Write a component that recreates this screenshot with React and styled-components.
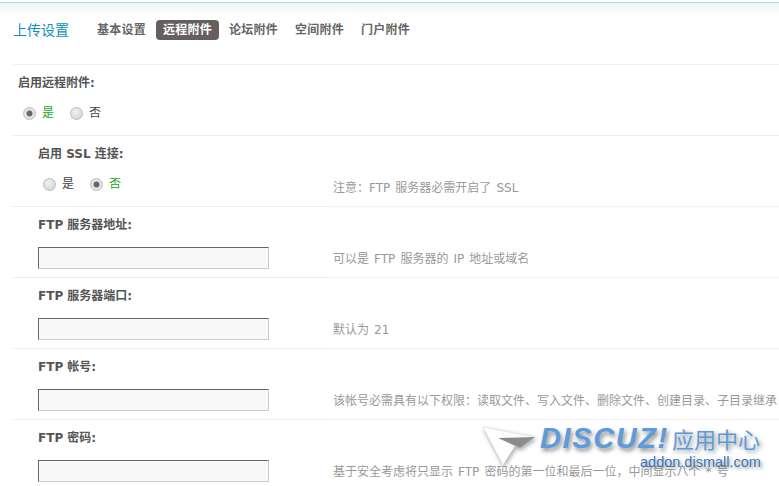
import React from 'react'
import styled, { createGlobalStyle } from 'styled-components'

const CJK = '"DejaVu Sans", "Noto Sans CJK SC", sans-serif'

const GlobalStyle = createGlobalStyle`
  html, body {
    margin: 0;
    height: 100%;
    overflow: hidden;
    background: #fff;
  }
  body {
    font: 12px/18px ${CJK};
    color: #444;
  }
`

const Page = styled.div`
  position: relative;
  width: 779px;
  height: 486px;
  overflow: hidden;
  padding-top: 2px;
  box-sizing: border-box;
`

const Header = styled.div`
  height: 61px;
  margin-bottom: 1px;
  padding: 17px 0 0 13px;
  box-sizing: border-box;
  border-top: 1px solid #bcd3de;
  background: linear-gradient(#e9f4fa, #fff 13px);
  display: flex;
  align-items: flex-start;
`

const Title = styled.h1`
  margin: 0 21px 0 0;
  font-size: 14px;
  font-weight: 400;
  line-height: 20px;
  color: #0d8fba;
`

const Tabs = styled.div`
  display: flex;
  gap: 3px;
`

const Tab = styled.a`
  padding: 0 7px;
  height: 20px;
  line-height: 20px;
  border-radius: 4px;
  font-weight: 700;
  letter-spacing: 0.25px;
  color: ${p => (p.$active ? '#fff' : '#666')};
  background: ${p => (p.$active ? '#665f62' : 'transparent')};
`

const Row = styled.div`
  display: grid;
  grid-template-columns: 316px 1fr;
  height: ${p => (p.$first ? 72 : 71)}px;
  margin-left: 13px;
  border-top: ${p => (p.$first ? '1px solid #f1f1f1' : 'none')};
  box-sizing: border-box;
`

const Main = styled.div`
  padding: 8px 0 0 ${p => (p.$top ? 5 : 25)}px;
  border-bottom: 1px solid #e2eef5;
`

const Label = styled.div`
  height: 20px;
  line-height: 20px;
  font-weight: 700;
  color: #555;
`

const Hint = styled.div`
  padding: 43px 0 0 4px;
  line-height: 18px;
  color: #999;
  word-spacing: 1.25px;
  white-space: nowrap;
  overflow: hidden;
  border-bottom: 1px solid ${p => (p.$top ? '#e2eef5' : '#f2f2f2')};
`

const Choices = styled.div`
  display: flex;
  align-items: center;
  gap: 16px;
  margin: 11px 0 0 5px;
`

const Choice = styled.label`
  display: flex;
  align-items: center;
  gap: 6px;
  color: ${p => (p.$on ? '#1aa81a' : '#444')};
`

const Radio = styled.input.attrs({ type: 'radio', readOnly: true })`
  appearance: none;
  width: 13px;
  height: 13px;
  margin: 0;
  border-radius: 50%;
  border: 1px solid #bbb;
  box-sizing: border-box;
  background: ${p =>
    p.checked
      ? 'radial-gradient(circle, #666 0 2.6px, #e4e4e4 3.4px)'
      : 'radial-gradient(circle at 40% 35%, #f2f2f2, #cfcfcf)'};
`

const TextInput = styled.input`
  display: block;
  width: 231px;
  height: 22px;
  margin-top: 12px;
  padding: 0;
  box-sizing: border-box;
  border: 1px solid;
  border-color: #666 #ccc #ccc #666;
  background: #f9f9f9;
`

const Watermark = styled.div`
  position: absolute;
  left: 481px;
  top: 424px;
  width: 290px;
  height: 60px;
`

const Arrow = styled.svg`
  position: absolute;
  left: 0;
  top: 0;
  filter: drop-shadow(1px 2px 2px rgba(0, 0, 0, 0.35));
`

const Brand = styled.span`
  position: absolute;
  left: 59px;
  top: -3px;
  font: italic 700 29px/34px "Liberation Sans", sans-serif;
  letter-spacing: 1.6px;
  color: #5c9bdc;
  text-shadow: 2px 3px 4px rgba(0, 0, 0, 0.45);
`

const BrandCn = styled.span`
  position: absolute;
  left: 191px;
  top: -2px;
  font: 400 22px/32px "Noto Sans CJK SC", sans-serif;
  color: #5c9bdc;
  text-shadow: 2px 2px 4px rgba(0, 0, 0, 0.45);
`

const BrandUrl = styled.span`
  position: absolute;
  left: 159px;
  top: 28px;
  font: 400 14.5px/20px "Liberation Sans", sans-serif;
  color: #3a75b8;
  text-shadow: 2px 2px 3px rgba(0, 0, 0, 0.4);
`

const tabs = ['基本设置', '远程附件', '论坛附件', '空间附件', '门户附件']

const fields = [
  { label: 'FTP 服务器地址:', hint: '可以是 FTP 服务器的 IP 地址或域名' },
  { label: 'FTP 服务器端口:', hint: '默认为 21' },
  {
    label: 'FTP 帐号:',
    hint: '该帐号必需具有以下权限\uFF1A读取文件、写入文件、删除文件、创建目录、子目录继承',
  },
  {
    label: 'FTP 密码:',
    hint: '基于安全考虑将只显示 FTP 密码的第一位和最后一位\uFF0C中间显示八个 * 号',
  },
]

export default function App() {
  return (
    <Page>
      <GlobalStyle />
      <Header>
        <Title>上传设置</Title>
        <Tabs>
          {tabs.map((t, i) => (
            <Tab key={t} $active={i === 1}>{t}</Tab>
          ))}
        </Tabs>
      </Header>

      <Row $first>
        <Main $top>
          <Label>启用远程附件:</Label>
          <Choices>
            <Choice $on><Radio checked name="remote" />是</Choice>
            <Choice><Radio name="remote" />否</Choice>
          </Choices>
        </Main>
        <Hint $top />
      </Row>

      <Row>
        <Main>
          <Label>启用 SSL 连接:</Label>
          <Choices>
            <Choice><Radio name="ssl" />是</Choice>
            <Choice $on><Radio checked name="ssl" />否</Choice>
          </Choices>
        </Main>
        <Hint>注意{'\uFF1A'}FTP 服务器必需开启了 SSL</Hint>
      </Row>

      {fields.map(f => (
        <Row key={f.label}>
          <Main>
            <Label>{f.label}</Label>
            <TextInput />
          </Main>
          <Hint>{f.hint}</Hint>
        </Row>
      ))}

      <Watermark>
        <Arrow width="58" height="46" viewBox="0 0 58 46">
          <path d="M2 3 L54 13 L39 24 L34 22 L22 41 Z" fill="#fff" stroke="#dedede" strokeWidth="0.7" />
          <path d="M17 14 L54 13 L39 24 Z" fill="#8c8c8c" />
        </Arrow>
        <Brand>DISCUZ!</Brand>
        <BrandCn>应用中心</BrandCn>
        <BrandUrl>addon.dismall.com</BrandUrl>
      </Watermark>
    </Page>
  )
}
